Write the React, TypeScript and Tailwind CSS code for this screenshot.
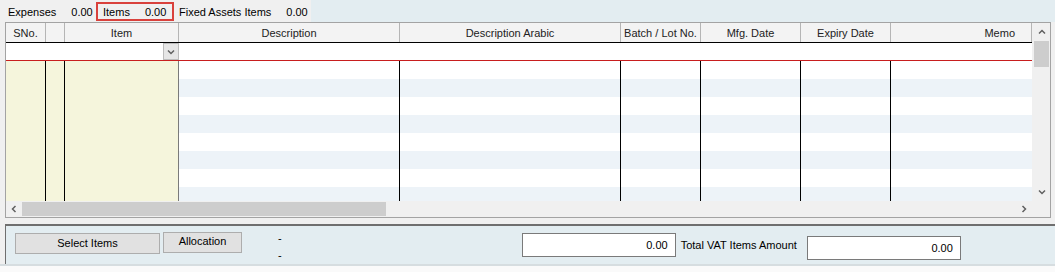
import type { ReactNode } from "react";

const COLUMNS = [
  { label: "SNo.", width: 40, align: "center" },
  { label: "", width: 19, align: "center" },
  { label: "Item", width: 114, align: "center" },
  { label: "Description", width: 221, align: "center" },
  { label: "Description Arabic", width: 221, align: "center" },
  { label: "Batch / Lot No.", width: 80, align: "center" },
  { label: "Mfg. Date", width: 100, align: "center" },
  { label: "Expiry Date", width: 90, align: "center" },
  { label: "Memo", width: 141, align: "right" },
];

const ROW_COUNT = 8;

export default function App() {
  return (
    <div className="flex h-[272px] w-[1055px] flex-col overflow-hidden bg-[#f0f0f0] font-['Liberation_Sans',Arial,sans-serif] text-[11px] text-black">
      <TabStrip />
      <ItemsGrid />
      <FooterPanel />
    </div>
  );
}

function TabStrip() {
  return (
    <div className="flex h-[22px] shrink-0">
      <div className="flex w-[311px] items-stretch bg-[#f0f0f0]">
        <div className="flex w-[96px] items-center pl-[8px] pt-[2px]">
          <span>Expenses</span>
          <span className="ml-[15px]">0.00</span>
        </div>
        <div className="mt-[2px] flex h-[19px] w-[78px] items-start border-2 border-[#d9413c] pl-[5px]">
          <span>Items</span>
          <span className="ml-[15px]">0.00</span>
        </div>
        <div className="flex items-center pl-[5px] pt-[2px]">
          <span>Fixed Assets Items</span>
          <span className="ml-[15px]">0.00</span>
        </div>
      </div>
      <div className="flex-1 bg-[#e3edf1]" />
    </div>
  );
}

function ItemsGrid() {
  return (
    <div className="ml-[5px] flex h-[196px] w-[1046px] shrink-0 flex-col border border-[#a3a3a3] bg-white">
      <div className="flex min-h-0 flex-1">
        <div className="flex w-[1026px] flex-col">
          <div className="flex h-[20px] shrink-0 border-b border-black bg-[#f3f3f3]">
            {COLUMNS.map((column, index) => (
              <div
                key={index}
                style={{ width: column.width }}
                className={`flex shrink-0 items-center border-r border-[#b5b5b5] pt-[1px] text-[#222] ${
                  column.align === "right" ? "justify-end pr-[16px]" : "justify-center"
                }`}
              >
                {column.label}
              </div>
            ))}
          </div>
          <div className="flex h-[18px] shrink-0 border-b border-[#c81e1e] bg-white">
            <div className="w-[157px] shrink-0" />
            <div className="flex h-[17px] w-[16px] items-center justify-center border border-[#bcbcbc] bg-[#e6e6e6]">
              <Chevron dir="down" />
            </div>
          </div>
          <div className="flex min-h-0 flex-1">
            <BeigeColumn width={40} line="border-black" />
            <BeigeColumn width={19} line="border-black" />
            <BeigeColumn width={114} line="border-[#7a7a7a]" />
            {COLUMNS.slice(3).map((column, index) => (
              <StripedColumn key={index} width={column.width} last={index === COLUMNS.length - 4} />
            ))}
          </div>
        </div>
        <div className="flex w-[18px] flex-col bg-[#f0f0f0] pl-[1px]">
          <div className="flex h-[18px] items-center justify-center">
            <Chevron dir="up" />
          </div>
          <div className="mx-[1px] h-[26px] bg-[#cdcdcd]" />
          <div className="flex-1" />
          <div className="flex h-[18px] items-center justify-center">
            <Chevron dir="down" />
          </div>
        </div>
      </div>
      <div className="flex h-[16px] shrink-0 items-stretch bg-[#f0f0f0]">
        <div className="flex w-[16px] items-center justify-center">
          <Chevron dir="left" />
        </div>
        <div className="my-[1px] w-[364px] bg-[#cdcdcd]" />
        <div className="flex-1" />
        <div className="flex w-[16px] items-center justify-center">
          <Chevron dir="right" />
        </div>
        <div className="w-[18px]" />
      </div>
    </div>
  );
}

function BeigeColumn({ width, line }: { width: number; line: string }) {
  return <div style={{ width }} className={`shrink-0 border-r bg-[#f5f5dc] ${line}`} />;
}

function StripedColumn({ width, last }: { width: number; last: boolean }) {
  return (
    <div style={{ width }} className={`flex shrink-0 flex-col overflow-hidden ${last ? "" : "border-r border-black"}`}>
      {Array.from({ length: ROW_COUNT }).map((_, index) => (
        <div
          key={index}
          className={`h-[18px] shrink-0 ${index % 2 === 1 ? "bg-[#edf3f8]" : "bg-white"}`}
        />
      ))}
    </div>
  );
}

function FooterPanel() {
  return (
    <div className="mt-[6px] flex flex-1 flex-col">
      <div className="ml-[5px] flex h-[40px] items-start border-l border-t-2 border-[#6f6f6f] bg-[#e3edf1]">
        <FooterButton className="ml-[9px] mt-[7px] h-[21px] w-[145px]">Select Items</FooterButton>
        <FooterButton className="ml-[3px] mt-[6px] h-[21px] w-[79px] pb-[2px]">Allocation</FooterButton>
        <div className="ml-[36px] mt-[4px] flex flex-col leading-[17px]">
          <span>-</span>
          <span>-</span>
        </div>
        <AmountBox className="ml-[240px] mt-[7px] w-[154px]" />
        <span className="ml-[5px] mt-[11px]">Total VAT Items Amount</span>
        <AmountBox className="ml-[10px] mt-[10px] w-[154px]" />
      </div>
      <div className="h-[2px] bg-[#d6dde0]" />
      <div className="flex-1 bg-[#fafafa]" />
    </div>
  );
}

function FooterButton({ children, className }: { children: ReactNode; className: string }) {
  return (
    <div
      className={`flex items-center justify-center border border-[#adadad] bg-[#e1e1e1] ${className}`}
    >
      {children}
    </div>
  );
}

function AmountBox({ className }: { className: string }) {
  return (
    <div
      className={`flex h-[24px] items-center justify-end border border-[#7a7a7a] bg-white pr-[7px] ${className}`}
    >
      0.00
    </div>
  );
}

function Chevron({ dir }: { dir: "up" | "down" | "left" | "right" }) {
  const paths = {
    up: "M2 6.5 L5 3.5 L8 6.5",
    down: "M2 3.5 L5 6.5 L8 3.5",
    left: "M6.5 2 L3.5 5 L6.5 8",
    right: "M3.5 2 L6.5 5 L3.5 8",
  };
  return (
    <svg width="10" height="10" viewBox="0 0 10 10" fill="none">
      <path d={paths[dir]} stroke="#606060" strokeWidth="1.5" />
    </svg>
  );
}
